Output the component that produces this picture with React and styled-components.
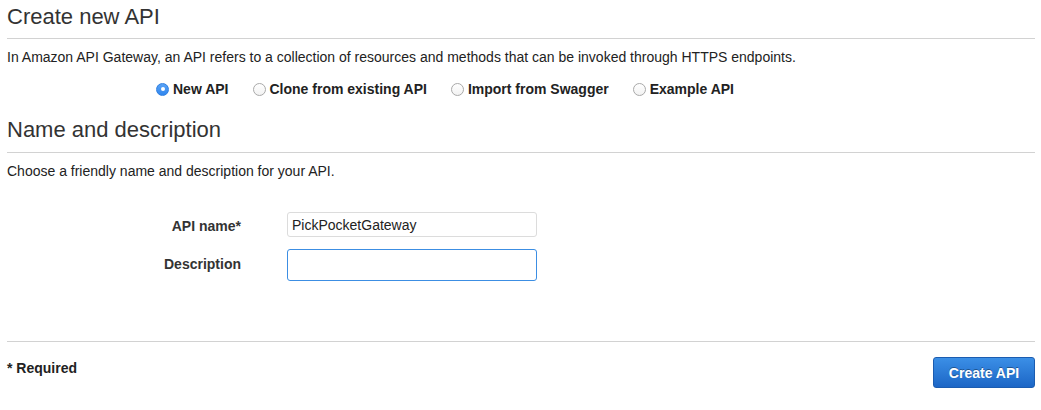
import React from 'react'
import styled, { createGlobalStyle } from 'styled-components'

const GlobalStyle = createGlobalStyle`
  body {
    margin: 0;
    background: #fff;
    font-family: "Liberation Sans", Arial, sans-serif;
    color: #222;
  }
`;

const Page = styled.div`
    padding: 0 6px 0 7px;
`;

const SectionHeader = styled.div`
    padding: ${props => props.top}px 0 ${props => props.bottom}px;
    border-bottom: 1px solid #d2d2d2;
`;

const Heading = styled.h1`
    margin: 0;
    font-size: 22px;
    line-height: 26px;
    font-weight: normal;
    color: #333;
`;

const Text = styled.p`
    margin: ${props => props.top}px 0 0;
    font-size: 14px;
    line-height: 18px;
    color: #222;
`;

const RadioRow = styled.div`
    display: flex;
    gap: 24px;
    margin: 14px 0 0 149px;
`;

const RadioOption = styled.label`
    display: flex;
    align-items: center;
    gap: 4px;
    font-size: 14px;
    line-height: 18px;
    font-weight: bold;
    color: #222;
`;

const RadioDot = styled.span`
    width: 13px;
    height: 13px;
    border-radius: 50%;
    box-sizing: border-box;
    display: flex;
    align-items: center;
    justify-content: center;
    background: ${props => props.checked ? 'linear-gradient(#5aa3f6, #2f86ef)' : 'linear-gradient(#fff, #f2f2f2)'};
    border: 1px solid ${props => props.checked ? '#2f7fe0' : '#a9a9a9'};

    &::after {
        content: '';
        display: ${props => props.checked ? 'block' : 'none'};
        width: 4px;
        height: 4px;
        border-radius: 50%;
        background: #fff;
    }
`;

const Form = styled.div`
    display: grid;
    grid-template-columns: 234px 250px;
    column-gap: 46px;
    row-gap: 12px;
    align-items: center;
    margin-top: 32px;
    margin-bottom: 60px;
`;

const Label = styled.div`
    text-align: right;
    font-size: 14px;
    font-weight: bold;
    color: #333;
    margin-top: ${props => props.shift || 0}px;
`;

const Input = styled.input`
    box-sizing: border-box;
    width: 250px;
    height: ${props => props.tall ? 32 : 25}px;
    padding: 0 4px;
    font-family: "Liberation Sans", Arial, sans-serif;
    font-size: 14px;
    color: #222;
    border: 1px solid ${props => props.focused ? '#3c8ee3' : '#dcdcdc'};
    border-radius: 3px;
    outline: none;
    background: #fff;
`;

const Footer = styled.div`
    display: flex;
    justify-content: space-between;
    align-items: flex-start;
    border-top: 1px solid #d2d2d2;
    padding-top: 15px;
`;

const Required = styled.div`
    margin-top: 3px;
    font-size: 14px;
    font-weight: bold;
    color: #222;
`;

const Button = styled.button`
    width: 102px;
    height: 31px;
    border: 1px solid #1b5cb0;
    border-radius: 3px;
    background: linear-gradient(#3b8fe6, #1c66c6);
    color: #fff;
    font-family: "Liberation Sans", Arial, sans-serif;
    font-size: 14px;
    font-weight: bold;
    text-shadow: 0 -1px 0 rgba(0, 0, 0, 0.35);
    cursor: pointer;
`;

const options = ['New API', 'Clone from existing API', 'Import from Swagger', 'Example API']

function App() {
    return (
        <Page>
            <GlobalStyle />

            <SectionHeader top={4} bottom={8}>
                <Heading>Create new API</Heading>
            </SectionHeader>
            <Text top={9}>In Amazon API Gateway, an API refers to a collection of resources and methods that can be invoked through HTTPS endpoints.</Text>

            <RadioRow>
                {options.map((name, i) => (
                    <RadioOption key={name}>
                        <RadioDot checked={i === 0} />
                        {name}
                    </RadioOption>
                ))}
            </RadioRow>

            <SectionHeader top={19} bottom={9}>
                <Heading>Name and description</Heading>
            </SectionHeader>
            <Text top={9}>Choose a friendly name and description for your API.</Text>

            <Form>
                <Label shift={2}>API name*</Label>
                <Input defaultValue="PickPocketGateway" />
                <Label shift={-3}>Description</Label>
                <Input tall focused />
            </Form>

            <Footer>
                <Required>* Required</Required>
                <Button>Create API</Button>
            </Footer>
        </Page>
    )
}

export default App
